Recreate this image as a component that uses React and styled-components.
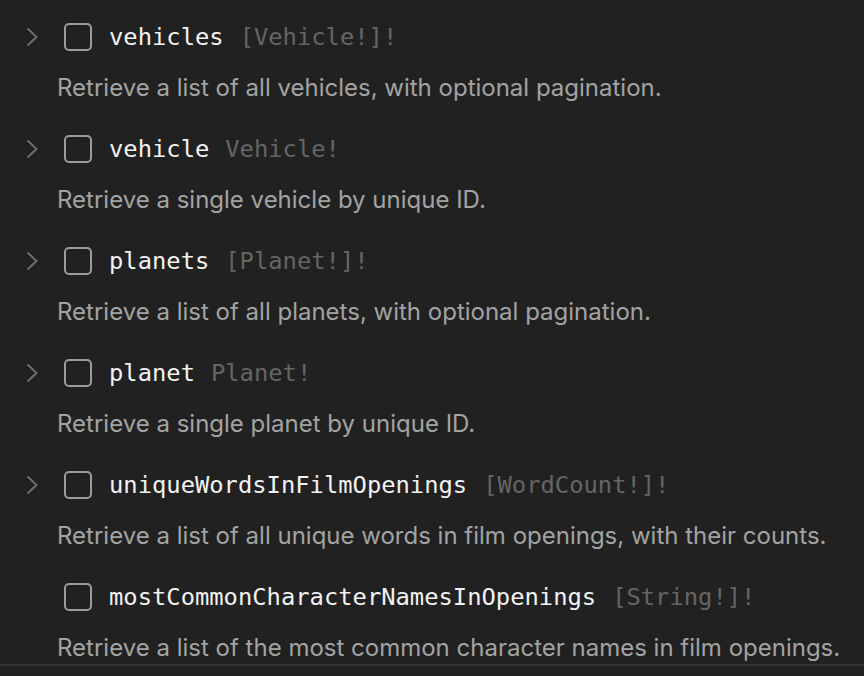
import React from 'react';
import styled, { createGlobalStyle } from 'styled-components';

const GlobalStyle = createGlobalStyle`
  html, body {
    margin: 0;
    padding: 0;
    background: #212121;
  }
`

const List = styled.div`
  width: 864px;
  height: 676px;
  background: #212121;
  overflow: hidden;
`

const Fields = styled.div`
  display: flex;
  flex-direction: column;
  gap: 31px;
  padding-top: 23px;
  border-bottom: 2px solid #333333;
`

const Field = styled.div`
  display: flex;
  flex-direction: column;
  gap: 21px;
`

const FieldHead = styled.div`
  display: flex;
  align-items: center;
  height: 28px;
`

const Toggle = styled.div`
  width: 64px;
  height: 28px;
  display: flex;
  align-items: center;
  padding-left: 26px;
  box-sizing: border-box;
  visibility: ${p => (p.$hidden ? 'hidden' : 'visible')};
`

const Checkbox = styled.div`
  width: 28px;
  height: 28px;
  box-sizing: border-box;
  border: 2px solid #9c9c9c;
  border-radius: 5px;
  margin-right: 17px;
`

const Name = styled.span`
  font-family: "DejaVu Sans Mono", "Liberation Mono", monospace;
  font-size: 23.8px;
  color: #f2f2f2;
  white-space: pre;
`

const Type = styled.span`
  font-family: "DejaVu Sans Mono", "Liberation Mono", monospace;
  font-size: 23.8px;
  color: #656565;
  margin-left: 16px;
  white-space: pre;
`

const Desc = styled.div`
  font-family: Inter, "Noto Sans", sans-serif;
  font-size: 24px;
  line-height: 32px;
  color: #a3a3a3;
  padding-left: 57px;
  white-space: nowrap;
`

const Chevron = () => (
  <svg width="12" height="20" viewBox="0 0 12 20">
    <polyline points="1.5,1.5 10.5,10 1.5,18.5" fill="none" stroke="#6e6e6e" strokeWidth="2" />
  </svg>
)

const fields = [
  { name: 'vehicles', type: '[Vehicle!]!', desc: 'Retrieve a list of all vehicles, with optional pagination.' },
  { name: 'vehicle', type: 'Vehicle!', desc: 'Retrieve a single vehicle by unique ID.' },
  { name: 'planets', type: '[Planet!]!', desc: 'Retrieve a list of all planets, with optional pagination.' },
  { name: 'planet', type: 'Planet!', desc: 'Retrieve a single planet by unique ID.' },
  { name: 'uniqueWordsInFilmOpenings', type: '[WordCount!]!', desc: 'Retrieve a list of all unique words in film openings, with their counts.' },
  { name: 'mostCommonCharacterNamesInOpenings', type: '[String!]!', desc: 'Retrieve a list of the most common character names in film openings.', leaf: true },
]

export default function App() {
  return (
    <List>
      <GlobalStyle />
      <Fields>
        {fields.map(f => (
          <Field key={f.name}>
            <FieldHead>
              <Toggle $hidden={f.leaf}>
                <Chevron />
              </Toggle>
              <Checkbox />
              <Name>{f.name}</Name>
              <Type>{f.type}</Type>
            </FieldHead>
            <Desc>{f.desc}</Desc>
          </Field>
        ))}
      </Fields>
    </List>
  )
}
